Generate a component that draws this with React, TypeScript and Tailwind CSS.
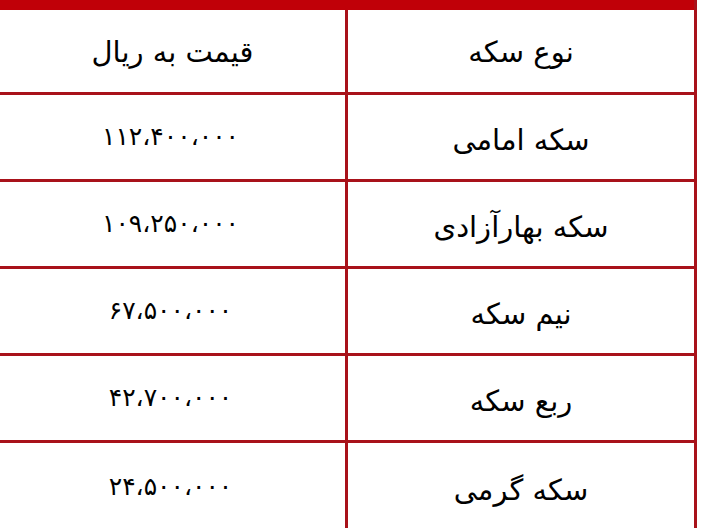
const rows = [
  { name: 'سکه امامی', price: '۱۱۲،۴۰۰،۰۰۰' },
  { name: 'سکه بهارآزادی', price: '۱۰۹،۲۵۰،۰۰۰' },
  { name: 'نیم سکه', price: '۶۷،۵۰۰،۰۰۰' },
  { name: 'ربع سکه', price: '۴۲،۷۰۰،۰۰۰' },
  { name: 'سکه گرمی', price: '۲۴،۵۰۰،۰۰۰' },
]

export default function App() {
  return (
    <div className="w-[706px] h-[528px] bg-white overflow-hidden" style={{ fontFamily: '"DejaVu Sans", sans-serif' }}>
      <div dir="rtl" className="w-[697px] border-r-[3px] border-[#a8121a] min-h-[528px]">
        {/* top bar */}
        <div className="h-[10px] bg-[#c00008]" />

        {/* header */}
        <div className="flex h-[85px] border-b-[3px] border-[#a8121a]">
          <div className="w-[346px] flex items-center justify-center text-[29px] text-black pt-1">نوع سکه</div>
          <div className="w-[3px] bg-[#a8121a]" />
          <div className="flex-1 flex items-center justify-center text-[29px] text-black pt-1">قیمت به ریال</div>
        </div>

        {rows.map((r, i) => (
          <div
            key={r.name}
            className={`flex h-[87px] ${i < rows.length - 1 ? 'border-b-[3px] border-[#a8121a]' : ''}`}
          >
            <div className="w-[346px] flex items-center justify-center text-[29px] text-black pt-2">{r.name}</div>
            <div className="w-[3px] bg-[#a8121a]" />
            <div className="flex-1 flex items-center justify-center text-[25px] text-black pr-1">{r.price}</div>
          </div>
        ))}
      </div>
    </div>
  )
}
